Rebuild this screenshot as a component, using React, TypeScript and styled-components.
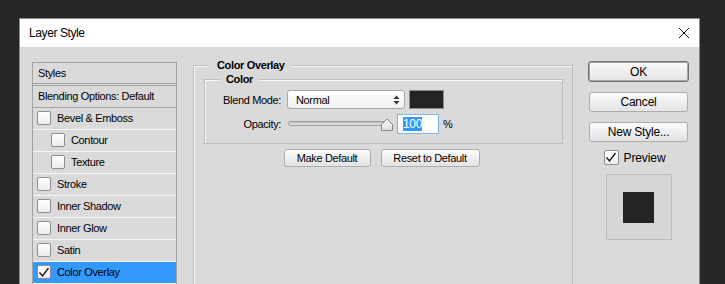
import React from 'react'
import styled, { createGlobalStyle } from 'styled-components'

const GlobalStyle = createGlobalStyle`
    html, body {
        margin: 0;
        padding: 0;
        background: #262626;
        overflow: hidden;
    }
    * {
        box-sizing: border-box;
    }
`

const UI_FONT = `"Liberation Sans", Arial, sans-serif`

const StyledPage = styled.div`
    padding: 18px 0 0 19px;
    height: 284px;
    font-family: ${UI_FONT};
    font-size: 11px;
    letter-spacing: -0.35px;
    color: #000;
`

const StyledDialog = styled.div`
    width: 681px;
    height: 300px;
    border: 1px solid #8a8a8a;
    background: #dadada;
`

const StyledTitleBar = styled.div`
    height: 28px;
    background: #fff;
    display: flex;
    align-items: center;
    justify-content: space-between;
    padding: 0 9px 0 9px;
    font-size: 12px;
    letter-spacing: -0.4px;
`

const StyledBody = styled.div`
    display: flex;
    align-items: flex-start;
    padding: 15px 10px 0 12px;
`

const StyledList = styled.div`
    width: 145px;
    height: 240px;
    border: 1px solid #a3a3a3;
    border-bottom: none;
`

const StyledHeader = styled.div`
    height: 23px;
    padding: 0 0 1px 5px;
    display: flex;
    align-items: center;
    border-bottom: 3px double #a3a3a3;
`

const StyledListRow = styled.div<{ $indent?: boolean; $active?: boolean; $strong?: boolean }>`
    height: 22px;
    display: flex;
    align-items: center;
    gap: 6px;
    padding: 0 0 1px ${(p) => (p.$strong ? 5 : p.$indent ? 18 : 4)}px;
    border-bottom: 1px solid ${(p) => (p.$strong ? '#a3a3a3' : '#f6f6f6')};
    background: ${(p) => (p.$active ? '#3399ff' : 'transparent')};
`

const StyledCheck = styled.span<{ $size?: number }>`
    width: ${(p) => p.$size ?? 14}px;
    height: ${(p) => p.$size ?? 14}px;
    flex: none;
    border: 1px solid #8e8e8e;
    border-radius: 2px;
    background: linear-gradient(#ffffff, #ececec);
    display: flex;
    align-items: center;
    justify-content: center;
`

const StyledMiddle = styled.fieldset`
    margin: -3px 0 0 16px;
    width: 380px;
    height: 250px;
    padding: 0 9px 0 10px;
    border: 1px solid #bdbdbd;
    box-shadow: inset 1px 1px 0 #f8f8f8;
`

const StyledLegend = styled.legend<{ $offset: number; $pad: number }>`
    margin-left: ${(p) => p.$offset}px;
    padding: 0 7px 0 ${(p) => p.$pad}px;
    font-weight: bold;
    line-height: 13px;
    background: #dadada;
`

const StyledGroup = styled.fieldset`
    margin: 1px 0 0 0;
    padding: 4px 0 9px 0;
    border: 1px solid #bdbdbd;
    box-shadow: inset 1px 1px 0 #f8f8f8;
`

const StyledFormGrid = styled.div`
    display: grid;
    grid-template-columns: 76px auto;
    column-gap: 6px;
    row-gap: 5px;
    align-items: center;
`

const StyledLabel = styled.span`
    text-align: right;
`

const StyledControls = styled.div`
    display: flex;
    align-items: center;
    gap: 4px;
`

const StyledSelect = styled.div`
    width: 118px;
    height: 19px;
    border: 1px solid #a7a7a7;
    border-radius: 3px;
    background: linear-gradient(#ffffff, #f0f0f0);
    display: flex;
    align-items: center;
    justify-content: space-between;
    padding: 0 4px 0 8px;
`

const StyledSwatch = styled.div`
    width: 35px;
    height: 19px;
    background: #232323;
    border: 1px solid #8c8c8c;
`

const StyledSlider = styled.div`
    position: relative;
    width: 105px;
    height: 14px;
    margin-left: 1px;
    display: flex;
    align-items: center;
`

const StyledTrack = styled.div`
    width: 100px;
    height: 5px;
    margin-top: -2px;
    border: 1px solid #9c9c9c;
    border-radius: 3px;
    background: linear-gradient(#bdbdbd, #e6e6e6);
`

const StyledThumb = styled.svg`
    position: absolute;
    left: 93px;
    top: 1px;
`

const StyledNumberBox = styled.div`
    width: 42px;
    height: 20px;
    border: 1px solid #7eb4ea;
    background: #fff;
    display: flex;
    align-items: center;
    padding-left: 5px;
    font-size: 12px;
`

const StyledSelection = styled.span`
    background: #3399ff;
    color: #fff;
`

const StyledButtonRow = styled.div`
    display: flex;
    justify-content: center;
    gap: 10px;
    margin-top: 5px;
    padding-right: 4px;
`

const StyledButton = styled.button<{ $w: number; $h?: number; $primary?: boolean }>`
    width: ${(p) => p.$w}px;
    height: ${(p) => p.$h ?? 18}px;
    padding: 0;
    border: 1px solid ${(p) => (p.$primary ? '#6f6f6f' : '#adadad')};
    box-shadow: ${(p) => (p.$primary ? 'inset 0 0 0 1px #a5a5a5' : 'none')};
    border-radius: 3px;
    background: linear-gradient(#fbfbfb, #e3e3e3);
    font-family: ${UI_FONT};
    font-size: 11px;
    letter-spacing: -0.35px;
    color: #000;
`

const StyledRight = styled.div`
    margin: -1px 0 0 15px;
    width: 101px;
    display: flex;
    flex-direction: column;
    align-items: center;
    gap: 10px;
`

const StyledBigButton = styled(StyledButton)`
    font-size: 12px;
    letter-spacing: -0.2px;
`

const StyledPreviewRow = styled.label`
    display: flex;
    align-items: center;
    gap: 5px;
    font-size: 12px;
    letter-spacing: -0.1px;
    margin: -2px 8px 0 0;
`

const StyledPreviewBox = styled.div`
    width: 66px;
    height: 66px;
    margin-top: -1px;
    border: 1px solid #bcbcbc;
    background: #d6d6d6;
    display: flex;
    align-items: center;
    justify-content: center;
`

const StyledPreviewSquare = styled.div`
    width: 31px;
    height: 31px;
    background: #232323;
`

const CheckMark = () => (
    <svg width="12" height="11" viewBox="0 0 12 11">
        <polyline points="1.5,5.5 4.5,9 10.5,1" fill="none" stroke="#1a1a1a" strokeWidth="1.4" />
    </svg>
)

const Check = ({ checked, size }: { checked?: boolean; size?: number }) => (
    <StyledCheck $size={size}>{checked && <CheckMark />}</StyledCheck>
)

const CloseIcon = () => (
    <svg width="12" height="12" viewBox="0 0 12 12">
        <path d="M1 1 L11 11 M11 1 L1 11" stroke="#111" strokeWidth="1" />
    </svg>
)

const UpDown = () => (
    <svg width="7" height="10" viewBox="0 0 7 10">
        <path d="M3.5 0.5 L6.5 4 H0.5 Z M3.5 9.5 L6.5 6 H0.5 Z" fill="#333" />
    </svg>
)

const effects = [
    { name: 'Bevel & Emboss' },
    { name: 'Contour', indent: true },
    { name: 'Texture', indent: true },
    { name: 'Stroke' },
    { name: 'Inner Shadow' },
    { name: 'Inner Glow' },
    { name: 'Satin' },
    { name: 'Color Overlay', checked: true, active: true },
]

const App = () => {
    return (
        <StyledPage>
            <GlobalStyle />
            <StyledDialog>
                <StyledTitleBar>
                    <span>Layer Style</span>
                    <CloseIcon />
                </StyledTitleBar>
                <StyledBody>
                    <StyledList>
                        <StyledHeader>Styles</StyledHeader>
                        <StyledListRow $strong>Blending Options: Default</StyledListRow>
                        {effects.map((fx) => (
                            <StyledListRow key={fx.name} $indent={fx.indent} $active={fx.active}>
                                <Check checked={fx.checked} />
                                {fx.name}
                            </StyledListRow>
                        ))}
                    </StyledList>

                    <StyledMiddle>
                        <StyledLegend $offset={4} $pad={9}>Color Overlay</StyledLegend>
                        <StyledGroup>
                            <StyledLegend $offset={14} $pad={7}>Color</StyledLegend>
                            <StyledFormGrid>
                                <StyledLabel>Blend Mode:</StyledLabel>
                                <StyledControls>
                                    <StyledSelect>
                                        <span>Normal</span>
                                        <UpDown />
                                    </StyledSelect>
                                    <StyledSwatch />
                                </StyledControls>
                                <StyledLabel>Opacity:</StyledLabel>
                                <StyledControls>
                                    <StyledSlider>
                                        <StyledTrack />
                                        <StyledThumb width="12" height="13" viewBox="0 0 12 13">
                                            <defs>
                                                <linearGradient id="thumb" x1="0" y1="0" x2="0" y2="1">
                                                    <stop offset="0" stopColor="#ffffff" />
                                                    <stop offset="1" stopColor="#dcdcdc" />
                                                </linearGradient>
                                            </defs>
                                            <path d="M0.5 12.5 V6.5 L6 1 L11.5 6.5 V12.5 Z" fill="url(#thumb)" stroke="#8a8a8a" />
                                        </StyledThumb>
                                    </StyledSlider>
                                    <StyledNumberBox>
                                        <StyledSelection>100</StyledSelection>
                                    </StyledNumberBox>
                                    <span>%</span>
                                </StyledControls>
                            </StyledFormGrid>
                        </StyledGroup>
                        <StyledButtonRow>
                            <StyledButton $w={87}>Make Default</StyledButton>
                            <StyledButton $w={99}>Reset to Default</StyledButton>
                        </StyledButtonRow>
                    </StyledMiddle>

                    <StyledRight>
                        <StyledBigButton $w={101} $h={21} $primary>OK</StyledBigButton>
                        <StyledBigButton $w={99} $h={20}>Cancel</StyledBigButton>
                        <StyledBigButton $w={99} $h={20}>New Style...</StyledBigButton>
                        <StyledPreviewRow>
                            <Check checked size={15} />
                            Preview
                        </StyledPreviewRow>
                        <StyledPreviewBox>
                            <StyledPreviewSquare />
                        </StyledPreviewBox>
                    </StyledRight>
                </StyledBody>
            </StyledDialog>
        </StyledPage>
    )
}

export default App
